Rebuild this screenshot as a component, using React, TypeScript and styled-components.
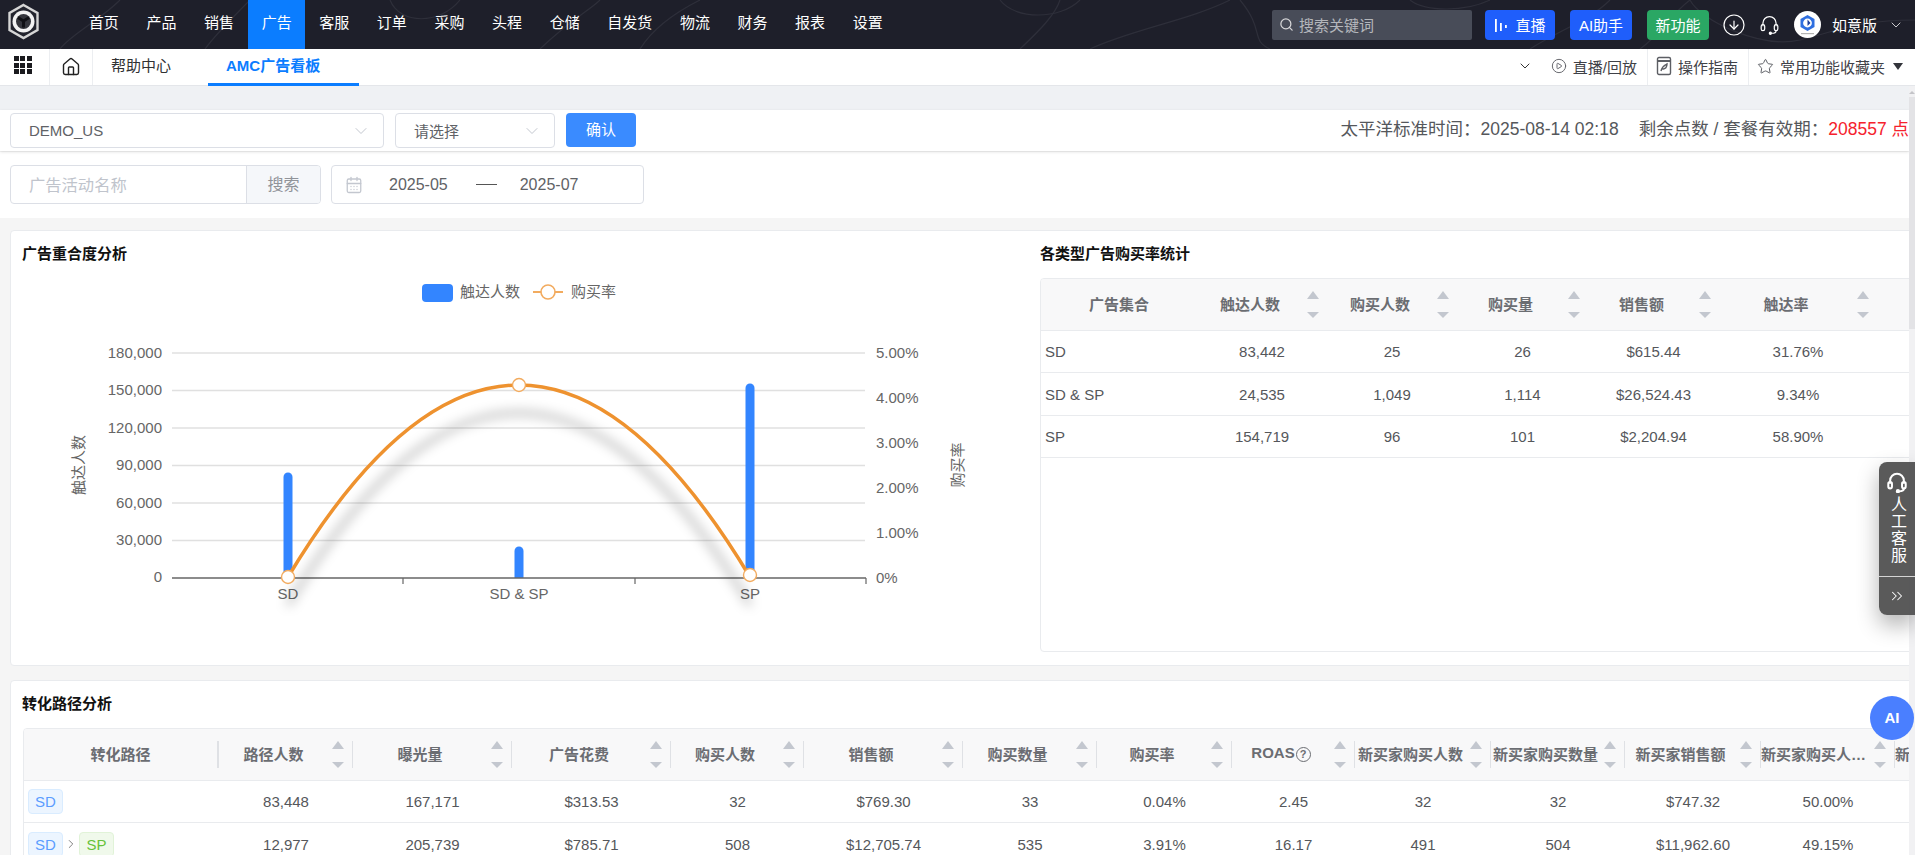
import React from "react";
import styled, { createGlobalStyle } from "styled-components";
import {
  CalendarDays,
  ChevronDown,
  ChevronRight,
  ChevronsRight,
  CircleArrowDown,
  CirclePlay,
  House,
  Search,
  Star,
} from "lucide-react";

const GlobalStyle = createGlobalStyle`
  html, body {
    margin: 0;
    padding: 0;
    background: #f5f5f5;
    font-family: "Liberation Sans", "Noto Sans CJK SC", sans-serif;
    overflow: hidden;
  }
  * {
    box-sizing: border-box;
  }
`;

const Page = styled.div`
  position: relative;
  width: 1915px;
  height: 855px;
  display: flex;
  flex-direction: column;
  overflow: hidden;
`;

/* top dark bar */
const TopBar = styled.header`
  position: relative;
  flex: none;
  height: 49px;
  display: flex;
  align-items: center;
  background: #1e1f2a;
  color: #fff;
  overflow: hidden;
`;

const TopPattern = styled.svg`
  position: absolute;
  left: 0;
  top: 0;
  pointer-events: none;
`;

const LogoBox = styled.div`
  position: relative;
  flex: none;
  width: 75px;
  height: 49px;
  padding: 3px 0 0 7px;
`;

const NavList = styled.nav`
  position: relative;
  display: flex;
`;

const NavItem = styled.a<{ $active?: boolean }>`
  padding: 0 13.8px;
  height: 49px;
  line-height: 46px;
  text-align: center;
  font-size: 15px;
  background: ${(p) => (p.$active ? "#0b7dff" : "transparent")};
`;

const TopTools = styled.div`
  position: relative;
  margin-left: auto;
  padding-right: 11px;
  display: flex;
  align-items: center;
`;

const SearchBox = styled.div`
  width: 200px;
  height: 30px;
  margin-right: 13px;
  padding-left: 7px;
  display: flex;
  align-items: center;
  gap: 5px;
  background: #484c58;
  border-radius: 2px;
  font-size: 15px;
  color: #b4b6bb;
`;

const TopButton = styled.a<{ $color: string; $w: number }>`
  width: ${(p) => p.$w}px;
  height: 30px;
  margin-right: 15px;
  display: flex;
  align-items: center;
  justify-content: center;
  gap: 7px;
  background: ${(p) => p.$color};
  border-radius: 4px;
  font-size: 15px;
  color: #fff;
`;

const TopIcon = styled.span<{ $ml?: number; $mr: number }>`
  display: flex;
  margin-left: ${(p) => p.$ml ?? 0}px;
  margin-right: ${(p) => p.$mr}px;
`;

const UserName = styled.span`
  margin: 0 11px 0 11px;
  font-size: 15px;
`;

/* tab row */
const TabBar = styled.div`
  flex: none;
  height: 37px;
  display: flex;
  align-items: stretch;
  background: #fff;
  border-bottom: 1px solid #e4e6ea;
  font-size: 15px;
  color: #303133;
`;

const IconCell = styled.div<{ $w: number }>`
  width: ${(p) => p.$w}px;
  display: flex;
  align-items: center;
  justify-content: center;
  border-right: 1px solid #eceef1;
`;

const GridDots = styled.div`
  display: grid;
  grid-template-columns: repeat(3, 5px);
  grid-auto-rows: 5px;
  gap: 1.5px;
  margin: -4px 0 0 -4px;
  span {
    background: #1b1b1f;
  }
`;

const Tab = styled.a<{ $active?: boolean; $w: number }>`
  width: ${(p) => p.$w}px;
  padding-left: 18px;
  line-height: 34px;
  font-weight: ${(p) => (p.$active ? 700 : 400)};
  color: ${(p) => (p.$active ? "#0b7dff" : "#303133")};
  border-bottom: 3px solid ${(p) => (p.$active ? "#0b7dff" : "transparent")};
  margin-bottom: -1px;
`;

const TabTools = styled.div`
  margin-left: auto;
  display: flex;
  align-items: stretch;
  color: #3f4147;
`;

const TabTool = styled.a<{ $divider?: boolean; $pl: number; $pr: number }>`
  display: flex;
  align-items: center;
  gap: 6px;
  padding: 0 ${(p) => p.$pr}px 2px ${(p) => p.$pl}px;
  border-right: ${(p) => (p.$divider ? "1px solid #eceef1" : "none")};
`;

const Caret = styled.span`
  width: 0;
  height: 0;
  margin-left: 2px;
  border-left: 5.5px solid transparent;
  border-right: 5.5px solid transparent;
  border-top: 7px solid #33353b;
`;

/* scrolling body */
const Body = styled.div`
  flex: 1;
  min-height: 0;
  display: flex;
`;

const Content = styled.main`
  width: 1909px;
  flex: none;
  overflow: hidden;
  background: #f5f5f5;
`;

const ScrollRail = styled.div`
  position: relative;
  flex: none;
  width: 6px;
  display: flex;
  flex-direction: column;
  align-items: center;
  background: #f1f1f3;
`;

const ScrollArrow = styled.span`
  margin-top: 5px;
  width: 0;
  height: 0;
  border-left: 3px solid transparent;
  border-right: 3px solid transparent;
  border-bottom: 3px solid #c4c4c8;
`;

const ScrollThumb = styled.span`
  margin-top: 3px;
  width: 6px;
  height: 232px;
  background: #e3e3e6;
`;

const TopStrip = styled.div`
  height: 24px;
  background: #eff1f4;
`;

const FilterBar = styled.div`
  position: relative;
  height: 41px;
  padding: 3px 0 0 10px;
  display: flex;
  align-items: flex-start;
  background: #fff;
  box-shadow: 0 1px 3px rgba(0, 0, 0, 0.12);
`;

const SelectBox = styled.div<{ $w: number }>`
  width: ${(p) => p.$w}px;
  height: 35px;
  margin-right: 11px;
  padding: 0 12px 0 18px;
  display: flex;
  align-items: center;
  justify-content: space-between;
  border: 1px solid #dcdfe6;
  border-radius: 4px;
  font-size: 15px;
  color: #606266;
`;

const ConfirmButton = styled.a`
  width: 70px;
  height: 34px;
  line-height: 34px;
  text-align: center;
  background: #3a8bff;
  border-radius: 4px;
  color: #fff;
  font-size: 15px;
`;

const StatusText = styled.div`
  margin-left: auto;
  flex: none;
  height: 35px;
  line-height: 32px;
  white-space: nowrap;
  font-size: 17.5px;
  color: #55575b;
  b {
    font-weight: 400;
    color: #f5222d;
  }
  span {
    margin: 0 20px 0 0;
  }
`;

const SearchRow = styled.div`
  height: 66px;
  margin-top: 1px;
  padding: 13px 0 0 10px;
  display: flex;
  background: #fff;
`;

const NameInput = styled.div`
  width: 311px;
  height: 39px;
  display: flex;
  border: 1px solid #dcdfe6;
  border-radius: 4px;
  overflow: hidden;
`;

const NamePlaceholder = styled.span`
  flex: 1;
  padding-left: 18px;
  line-height: 38px;
  font-size: 16.3px;
  color: #c0c4cc;
`;

const NameAddon = styled.span`
  width: 74px;
  text-align: center;
  line-height: 38px;
  font-size: 16px;
  color: #909399;
  background: #f5f7fa;
  border-left: 1px solid #dcdfe6;
`;

const DateRange = styled.div`
  width: 313px;
  height: 39px;
  margin-left: 10px;
  padding-left: 13px;
  display: flex;
  align-items: center;
  border: 1px solid #dcdfe6;
  border-radius: 4px;
  font-size: 16px;
  color: #606266;
`;

const DateValue = styled.span<{ $ml: number }>`
  margin-left: ${(p) => p.$ml}px;
`;

const DateDash = styled.span`
  margin-left: 28px;
  width: 21px;
  height: 1.5px;
  background: #555;
`;

/* panels */
const Panel = styled.section`
  width: 1960px;
  margin: 12px 0 0 10px;
  background: #fff;
  border: 1px solid #e9ebee;
  border-radius: 4px;
`;

const OverlapPanel = styled(Panel)`
  height: 436px;
  display: flex;
`;

const PathPanel = styled(Panel)`
  margin-top: 14px;
`;

const ChartSide = styled.div`
  flex: none;
  width: 1029px;
`;

const TableSide = styled.div`
  flex: 1;
  min-width: 0;
`;

const PanelTitle = styled.h3`
  margin: 0;
  padding: 13px 0 0 11px;
  height: 33px;
  line-height: 20px;
  font-size: 15px;
  font-weight: 700;
  color: #111;
`;

const SideTitle = styled(PanelTitle)`
  padding-left: 0;
`;

const ChartSvg = styled.svg`
  display: block;
  font-family: "Liberation Sans", "Noto Sans CJK SC", sans-serif;
`;

const TableFrame = styled.div<{ $h?: number }>`
  margin-top: 14px;
  height: ${(p) => (p.$h ? `${p.$h}px` : "auto")};
  border: 1px solid #e9ebee;
  border-radius: 4px;
  overflow: hidden;
`;

const PathFrame = styled(TableFrame)`
  margin-left: 12px;
`;

const DataTable = styled.table<{ $w: number }>`
  width: ${(p) => p.$w}px;
  table-layout: fixed;
  border-collapse: collapse;
  font-size: 15px;
  color: #55575b;
`;

const ColWidth = styled.col<{ $w: number }>`
  width: ${(p) => p.$w}px;
`;

const HeadCell = styled.th`
  height: 51px;
  padding: 0;
  background: #f8f8f9;
  border-bottom: 1px solid #e9ebee;
  font-size: 15px;
  font-weight: 700;
  color: #6b6d72;
`;

const HeadInner = styled.div<{ $sep?: number; $sort?: boolean }>`
  height: 27px;
  display: flex;
  align-items: center;
  gap: 4px;
  padding-right: ${(p) => (p.$sort ? "8px" : "0")};
  border-right: ${(p) => p.$sep ?? 0}px solid #dfe1e5;
`;

const HeadLabel = styled.span`
  flex: 1;
  min-width: 0;
  padding-bottom: 2px;
  white-space: nowrap;
  overflow: hidden;
  text-overflow: ellipsis;
  text-align: center;
`;

const Row = styled.tr`
  height: 42.5px;
`;

const Cell = styled.td<{ $left?: boolean }>`
  padding: 1px 0 0 ${(p) => (p.$left ? "4px" : "0")};
  text-align: ${(p) => (p.$left ? "left" : "center")};
  border-bottom: 1px solid #e9ebee;
  white-space: nowrap;
`;

const TagRow = styled.div`
  display: flex;
  align-items: center;
  gap: 1px;
`;

const Tag = styled.span<{ $kind: "sd" | "sp" }>`
  width: 35px;
  height: 25px;
  line-height: 23px;
  text-align: center;
  border-radius: 4px;
  border: 1px solid ${(p) => (p.$kind === "sd" ? "#d9ecff" : "#e1f3d8")};
  background: ${(p) => (p.$kind === "sd" ? "#ecf5ff" : "#f0f9eb")};
  color: ${(p) => (p.$kind === "sd" ? "#5b9dff" : "#67c23a")};
`;

/* floating things */
const ServiceWidget = styled.aside`
  position: absolute;
  right: 0;
  top: 462px;
  width: 36px;
  height: 153px;
  display: flex;
  flex-direction: column;
  align-items: center;
  background: rgba(78, 78, 78, 0.93);
  border-radius: 8px 0 0 8px;
  box-shadow: 0 10px 22px rgba(0, 0, 0, 0.3);
  color: #fff;
`;

const ServiceTop = styled.div`
  height: 115px;
  width: 100%;
  padding-top: 9px;
  display: flex;
  flex-direction: column;
  align-items: center;
  border-bottom: 1px solid #d4d4d4;
`;

const ServiceText = styled.span`
  margin-top: 3px;
  writing-mode: vertical-rl;
  text-orientation: upright;
  letter-spacing: 1px;
  font-size: 16px;
  line-height: 18px;
`;

const ServiceFold = styled.div`
  flex: 1;
  display: flex;
  align-items: center;
`;

const AiBubble = styled.a`
  position: absolute;
  left: 1870px;
  top: 696px;
  width: 44px;
  height: 44px;
  line-height: 44px;
  text-align: center;
  border-radius: 50%;
  background: #4a7fff;
  color: #fff;
  font-size: 15px;
  font-weight: 700;
`;

const HelpMark = styled.span`
  display: inline-block;
  width: 15px;
  height: 15px;
  line-height: 12px;
  margin-left: 1px;
  border: 1.5px solid #6b6d72;
  border-radius: 50%;
  font-size: 11px;
  vertical-align: 0;
`;

const navItems = ["首页", "产品", "销售", "广告", "客服", "订单", "采购", "头程", "仓储", "自发货", "物流", "财务", "报表", "设置"];

const statColumns = [
  { label: "广告集合", width: 156, sort: false },
  { label: "触达人数", width: 130, sort: true },
  { label: "购买人数", width: 130, sort: true },
  { label: "购买量", width: 131, sort: true },
  { label: "销售额", width: 131, sort: true },
  { label: "触达率", width: 158, sort: true },
  { label: "", width: 120, sort: false },
];

const statRows = [
  ["SD", "83,442", "25", "26", "$615.44", "31.76%", ""],
  ["SD & SP", "24,535", "1,049", "1,114", "$26,524.43", "9.34%", ""],
  ["SP", "154,719", "96", "101", "$2,204.94", "58.90%", ""],
];

const pathColumns = [
  { label: "转化路径", width: 195, sort: false },
  { label: "路径人数", width: 134, sort: true },
  { label: "曝光量", width: 159, sort: true },
  { label: "广告花费", width: 159, sort: true },
  { label: "购买人数", width: 133, sort: true },
  { label: "销售额", width: 159, sort: true },
  { label: "购买数量", width: 134, sort: true },
  { label: "购买率", width: 135, sort: true },
  { label: "ROAS", width: 123, sort: true, help: true },
  { label: "新买家购买人数", width: 136, sort: true },
  { label: "新买家购买数量", width: 134, sort: true },
  { label: "新买家销售额", width: 136, sort: true },
  { label: "新买家购买人数占比", width: 134, sort: true },
  { label: "新买家购买数量占比", width: 134, sort: true },
];

const pathRows = [
  { tags: ["sd"], values: ["83,448", "167,171", "$313.53", "32", "$769.30", "33", "0.04%", "2.45", "32", "32", "$747.32", "50.00%", ""] },
  { tags: ["sd", "sp"], values: ["12,977", "205,739", "$785.71", "508", "$12,705.74", "535", "3.91%", "16.17", "491", "504", "$11,962.60", "49.15%", ""] },
] as { tags: ("sd" | "sp")[]; values: string[] }[];

const sumWidth = (cols: { width: number }[]) => cols.reduce((t, c) => t + c.width, 0);

const SortIcon = () => (
  <svg width="12" height="27" viewBox="0 0 12 27" style={{ flex: "none" }}>
    <path d="M6 0 L12 8 H0 Z" fill="#c3c7cf" />
    <path d="M0 21 H12 L6 27 Z" fill="#c3c7cf" />
  </svg>
);

const LogoMark = () => (
  <svg width="33" height="37" viewBox="0 0 33 37">
    <path d="M16.5 2 L30.5 10 V27 L16.5 35 L2.5 27 V10 Z" fill="#23242e" stroke="#d6d6d6" strokeWidth="2.4" />
    <circle cx="16.5" cy="18.5" r="11" fill="#f2f2f2" />
    <circle cx="16.5" cy="18.5" r="7.5" fill="#34353c" />
    <path d="M11 14.5 L16.5 18 L22 14.5 M16.5 18 V24.5" stroke="#101015" strokeWidth="3" fill="none" />
  </svg>
);

const LiveIcon = () => (
  <svg width="14" height="14" viewBox="0 0 14 14" fill="#fff">
    <rect x="1" y="1" width="1.8" height="13" />
    <rect x="6" y="5" width="1.8" height="8" />
    <rect x="11" y="7" width="1.8" height="3" />
  </svg>
);

const HeadsetIcon = ({ size, weight }: { size: number; weight: number }) => (
  <svg width={size} height={size} viewBox="0 0 24 24" fill="none" stroke="#fff" strokeWidth={weight}>
    <path d="M4.5 14 V10.5 a7.5 7.5 0 0 1 15 0 V14" />
    <rect x="2.5" y="12" width="4" height="7" rx="2" />
    <rect x="17.5" y="12" width="4" height="7" rx="2" />
    <path d="M19.5 19 q0 3 -5 3" />
    <circle cx="13" cy="22" r="1.2" fill="#fff" />
  </svg>
);

const GuideIcon = () => (
  <svg width="16" height="20" viewBox="0 0 16 20" fill="none" stroke="#5c5e64" strokeWidth="1.4">
    <rect x="1.5" y="1.5" width="13" height="17" rx="1.5" />
    <path d="M1.5 5 H14.5" strokeWidth="2" />
    <path d="M5 15 C6 10 9 9 11 8 C11 11 9 13 6.5 13.2" />
  </svg>
);

const Avatar = () => (
  <svg width="27" height="27" viewBox="0 0 27 27" style={{ flex: "none" }}>
    <circle cx="13.5" cy="13.5" r="13.5" fill="#fff" />
    <path d="M13.5 4 L20.5 8 V16 L13.5 20 L6.5 16 V8 Z" fill="#2f6fe0" />
    <circle cx="13.5" cy="12" r="4.4" fill="#fff" />
    <path d="M13.5 8.5 L16.5 12 L13.5 15 Z" fill="#1c3f9c" />
    <rect x="7" y="22" width="13" height="1.2" fill="#b4b4b4" />
  </svg>
);

const TopBackdrop = () => (
  <TopPattern width="1915" height="49" viewBox="0 0 1915 49" fill="none" stroke="#2e2f3a" strokeWidth="1.2">
    <path d="M120 0 C100 20 70 35 60 49" />
    <path d="M250 0 C235 15 215 35 205 49" />
    <path d="M390 0 C400 25 440 25 460 0" />
    <path d="M540 49 C570 20 590 10 600 0" />
    <path d="M640 49 C655 25 680 10 700 0" />
    <path d="M1000 0 C1015 20 1060 20 1080 0" />
    <path d="M1090 49 C1130 30 1190 20 1230 0" />
    <path d="M1020 49 C1040 30 1055 15 1060 0" />
    <path d="M1240 0 C1265 30 1250 40 1270 49" />
    <path d="M1410 0 C1425 12 1465 12 1490 0" />
    <path d="M1530 49 C1560 30 1590 20 1610 0" />
    <path d="M1690 0 C1700 20 1760 49 1800 40 C1840 30 1860 20 1915 20" />
    <path d="M1640 49 C1660 35 1670 15 1690 0" />
  </TopPattern>
);

const curve = "M288 577 C365 449 442 385 519 385 C596 385 673 449 750 577";
const leftTicks = ["180,000", "150,000", "120,000", "90,000", "60,000", "30,000", "0"];
const rightTicks = ["5.00%", "4.00%", "3.00%", "2.00%", "1.00%", "0%"];

const OverlapChart = () => (
  <ChartSvg width="1029" height="400" viewBox="11 264 1029 400">
    <defs>
      <filter id="lineShadow" x="-10%" y="-20%" width="120%" height="140%">
        <feGaussianBlur stdDeviation="6" />
      </filter>
    </defs>

    <rect x="422" y="284" width="31" height="18" rx="4" fill="#3385ff" />
    <text x="460" y="297" fontSize="15" fill="#666">触达人数</text>
    <path d="M533 292 H563" stroke="#f2ab5f" strokeWidth="2" />
    <circle cx="548" cy="292" r="7" fill="#fff" stroke="#f2ab5f" strokeWidth="1.6" />
    <text x="571" y="297" fontSize="15" fill="#666">购买率</text>

    {leftTicks.map((t, i) => (
      <g key={t}>
        {i < 6 && <path d={`M172 ${353 + i * 37.5} H865`} stroke="#e0e0e0" strokeWidth="1.6" />}
        <text x="162" y={358 + i * 37.4} textAnchor="end" fontSize="15" fill="#666">{t}</text>
      </g>
    ))}
    {rightTicks.map((t, i) => (
      <text key={t} x="876" y={358 + i * 45} fontSize="15" fill="#666">{t}</text>
    ))}
    <text transform="translate(84 465) rotate(-90)" textAnchor="middle" fontSize="15" fill="#666">触达人数</text>
    <text transform="translate(963 465) rotate(-90)" textAnchor="middle" fontSize="15" fill="#666">购买率</text>

    <path d="M283.5 578 V477 a4.5 4.5 0 0 1 9 0 V578 Z" fill="#3385ff" />
    <path d="M514.5 578 V551 a4.5 4.5 0 0 1 9 0 V578 Z" fill="#3385ff" />
    <path d="M745.5 578 V388 a4.5 4.5 0 0 1 9 0 V578 Z" fill="#3385ff" />

    <path d="M172 578 H866" stroke="#666" strokeWidth="1.6" />
    {[403, 635, 866].map((x) => (
      <path key={x} d={`M${x} 578 V584`} stroke="#666" strokeWidth="1.2" />
    ))}
    {[["SD", 288], ["SD & SP", 519], ["SP", 750]].map(([label, x]) => (
      <text key={label} x={x} y="599" textAnchor="middle" fontSize="15" fill="#666">{label}</text>
    ))}

    <path d={curve} transform="translate(0 28)" fill="none" stroke="#000" strokeOpacity="0.36" strokeWidth="4" filter="url(#lineShadow)" />
    <path d={curve} fill="none" stroke="#ee922f" strokeWidth="3.5" />
    {[[288, 577], [519, 385], [750, 575]].map(([x, y]) => (
      <circle key={x} cx={x} cy={y} r="6.5" fill="#fff" stroke="#f2ab5f" strokeWidth="1.4" />
    ))}
  </ChartSvg>
);

const App: React.FC = () => {
  return (
    <Page>
      <GlobalStyle />
      <TopBar>
        <TopBackdrop />
        <LogoBox>
          <LogoMark />
        </LogoBox>
        <NavList>
          {navItems.map((item) => (
            <NavItem key={item} $active={item === "广告"}>{item}</NavItem>
          ))}
        </NavList>
        <TopTools>
          <SearchBox>
            <Search size={15} color="#d8d8da" strokeWidth={2} />
            搜索关键词
          </SearchBox>
          <TopButton $color="#1f5efb" $w={70}>
            <LiveIcon />
            直播
          </TopButton>
          <TopButton $color="#1f5efb" $w={62}>AI助手</TopButton>
          <TopButton $color="#2aa764" $w={62}>新功能</TopButton>
          <TopIcon $ml={-2} $mr={13}>
            <CircleArrowDown size={24} color="#fff" strokeWidth={1.2} />
          </TopIcon>
          <TopIcon $mr={14}>
            <HeadsetIcon size={21} weight={1.4} />
          </TopIcon>
          <Avatar />
          <UserName>如意版</UserName>
          <ChevronDown size={16} color="#d8d8da" strokeWidth={1.4} />
        </TopTools>
      </TopBar>

      <TabBar>
        <IconCell $w={50}>
          <GridDots>
            {Array.from({ length: 9 }).map((_, i) => (
              <span key={i} />
            ))}
          </GridDots>
        </IconCell>
        <IconCell $w={43}>
          <House size={20} color="#222" strokeWidth={1.7} />
        </IconCell>
        <Tab $w={115}>帮助中心</Tab>
        <Tab $w={151} $active>AMC广告看板</Tab>
        <TabTools>
          <TabTool $pl={0} $pr={18}>
            <ChevronDown size={16} color="#333" strokeWidth={1.5} />
          </TabTool>
          <TabTool $pl={0} $pr={10} $divider>
            <CirclePlay size={16} color="#5c5e64" strokeWidth={1.4} />
            直播/回放
          </TabTool>
          <TabTool $pl={8} $pr={10} $divider>
            <GuideIcon />
            操作指南
          </TabTool>
          <TabTool $pl={8} $pr={12}>
            <Star size={17} color="#5c5e64" strokeWidth={1.4} />
            常用功能收藏夹
            <Caret />
          </TabTool>
        </TabTools>
      </TabBar>

      <Body>
        <Content>
          <TopStrip />
          <FilterBar>
            <SelectBox $w={374}>
              DEMO_US
              <ChevronDown size={20} color="#c3c7cf" strokeWidth={1.2} />
            </SelectBox>
            <SelectBox $w={160}>
              请选择
              <ChevronDown size={20} color="#c3c7cf" strokeWidth={1.2} />
            </SelectBox>
            <ConfirmButton>确认</ConfirmButton>
            <StatusText>
              太平洋标准时间&#xFF1A;
              <span>2025-08-14 02:18</span>
              剩余点数 / 套餐有效期&#xFF1A;
              <b>208557 点</b>
            </StatusText>
          </FilterBar>
          <SearchRow>
            <NameInput>
              <NamePlaceholder>广告活动名称</NamePlaceholder>
              <NameAddon>搜索</NameAddon>
            </NameInput>
            <DateRange>
              <CalendarDays size={18} color="#c3c7cf" strokeWidth={1.7} />
              <DateValue $ml={26}>2025-05</DateValue>
              <DateDash />
              <DateValue $ml={23}>2025-07</DateValue>
            </DateRange>
          </SearchRow>

          <OverlapPanel>
            <ChartSide>
              <PanelTitle>广告重合度分析</PanelTitle>
              <OverlapChart />
            </ChartSide>
            <TableSide>
              <SideTitle>各类型广告购买率统计</SideTitle>
              <TableFrame $h={374}>
                <DataTable $w={sumWidth(statColumns)}>
                  <colgroup>
                    {statColumns.map((c, i) => (
                      <ColWidth key={i} $w={c.width} />
                    ))}
                  </colgroup>
                  <thead>
                    <tr>
                      {statColumns.map((c, i) => (
                        <HeadCell key={i}>
                          <HeadInner $sort={c.sort}>
                            <HeadLabel>{c.label}</HeadLabel>
                            {c.sort && <SortIcon />}
                          </HeadInner>
                        </HeadCell>
                      ))}
                    </tr>
                  </thead>
                  <tbody>
                    {statRows.map((r) => (
                      <Row key={r[0]}>
                        {r.map((v, i) => (
                          <Cell key={i} $left={i === 0}>{v}</Cell>
                        ))}
                      </Row>
                    ))}
                  </tbody>
                </DataTable>
              </TableFrame>
            </TableSide>
          </OverlapPanel>

          <PathPanel>
            <PanelTitle>转化路径分析</PanelTitle>
            <PathFrame>
              <DataTable $w={sumWidth(pathColumns)}>
                <colgroup>
                  {pathColumns.map((c, i) => (
                    <ColWidth key={i} $w={c.width} />
                  ))}
                </colgroup>
                <thead>
                  <tr>
                    {pathColumns.map((c, i) => (
                      <HeadCell key={i}>
                        <HeadInner $sep={i === 0 ? 2 : 1} $sort={c.sort}>
                          <HeadLabel>
                            {c.label}
                            {c.help && <HelpMark>?</HelpMark>}
                          </HeadLabel>
                          {c.sort && <SortIcon />}
                        </HeadInner>
                      </HeadCell>
                    ))}
                  </tr>
                </thead>
                <tbody>
                  {pathRows.map((r, n) => (
                    <Row key={n}>
                      <Cell $left>
                        <TagRow>
                          {r.tags.map((t, i) => (
                            <React.Fragment key={t}>
                              {i > 0 && <ChevronRight size={14} color="#666" strokeWidth={1.4} />}
                              <Tag $kind={t}>{t.toUpperCase()}</Tag>
                            </React.Fragment>
                          ))}
                        </TagRow>
                      </Cell>
                      {r.values.map((v, i) => (
                        <Cell key={i}>{v}</Cell>
                      ))}
                    </Row>
                  ))}
                </tbody>
              </DataTable>
            </PathFrame>
          </PathPanel>
        </Content>
        <ScrollRail>
          <ScrollArrow />
          <ScrollThumb />
        </ScrollRail>
      </Body>

      <ServiceWidget>
        <ServiceTop>
          <HeadsetIcon size={22} weight={2.2} />
          <ServiceText>人工客服</ServiceText>
        </ServiceTop>
        <ServiceFold>
          <ChevronsRight size={18} color="#fff" strokeWidth={1.4} />
        </ServiceFold>
      </ServiceWidget>
      <AiBubble>AI</AiBubble>
    </Page>
  );
};

export default App;
